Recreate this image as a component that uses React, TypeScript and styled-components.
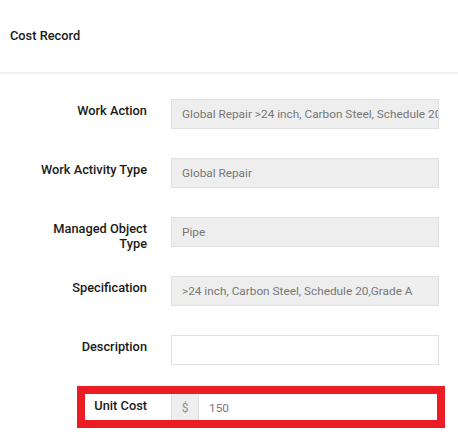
import React from "react";
import styled, { createGlobalStyle } from "styled-components";

const Global = createGlobalStyle`
  html, body { margin: 0; padding: 0; background: #ffffff; }
  body { font-family: Roboto, "Noto Sans", "Liberation Sans", sans-serif; }
  * { box-sizing: border-box; }
`;

const Page = styled.div`
  width: 458px;
  min-height: 434px;
  background: #ffffff;
`;

const Header = styled.header`
  height: 74px;
  display: flex;
  align-items: center;
  padding: 0 0 2px 10px;
  border-bottom: 2px solid #f1f1f1;
`;

const Title = styled.h1`
  margin: 0;
  font-size: 12.8px;
  font-weight: 500;
  color: #1a1a1a;
  line-height: 15px;
`;

const Form = styled.div`
  display: flex;
  flex-direction: column;
  gap: 29px;
  padding-top: 25px;
`;

const Row = styled.div`
  display: grid;
  grid-template-columns: 147px 268px;
  grid-template-rows: 30px;
  column-gap: 24px;
  align-items: start;
`;

const Highlight = styled.div`
  display: grid;
  grid-template-columns: 62px 1fr;
  column-gap: 24px;
  align-items: start;
  width: 368px;
  height: 42px;
  margin: -8px 0 0 77px;
  border: 8px solid #ec1c24;
  overflow: hidden;
`;

const Label = styled.label`
  text-align: right;
  font-size: 12.8px;
  font-weight: 500;
  line-height: 15px;
  color: #1a1a1a;
  padding-top: 4px;
  white-space: nowrap;
`;

const Field = styled.div<{ $readOnly?: boolean }>`
  height: 30px;
  display: flex;
  align-items: center;
  padding: 0 10px;
  background: ${(p) => (p.$readOnly ? "#eeeeee" : "#ffffff")};
  border: 1px solid #e0e0e0;
  font-size: 11.8px;
  color: #777777;
  white-space: nowrap;
  overflow: hidden;
`;

const Group = styled.div`
  display: flex;
  height: 30px;
  margin-top: -1px;
  width: 268px;
`;

const Addon = styled.span`
  width: 27px;
  display: flex;
  align-items: center;
  justify-content: center;
  background: #eeeeee;
  border: 1px solid #e0e0e0;
  border-right: none;
  font-size: 12px;
  color: #8a8f98;
`;

const GroupInput = styled.div`
  flex: 1;
  display: flex;
  align-items: center;
  padding: 0 10px;
  border: 1px solid #e0e0e0;
  font-size: 11.8px;
  color: #7b7480;
`;

const rows: { label: React.ReactNode; value: string; readOnly: boolean }[] = [
  { label: "Work Action", value: "Global Repair >24 inch, Carbon Steel, Schedule 20,Grade A", readOnly: true },
  { label: "Work Activity Type", value: "Global Repair", readOnly: true },
  { label: <>Managed Object<br />Type</>, value: "Pipe", readOnly: true },
  { label: "Specification", value: ">24 inch, Carbon Steel, Schedule 20,Grade A", readOnly: true },
  { label: "Description", value: "", readOnly: false },
];

export default function App() {
  return (
    <Page>
      <Global />
      <Header>
        <Title>Cost Record</Title>
      </Header>
      <Form>
        {rows.map((r, i) => (
          <Row key={i}>
            <Label>{r.label}</Label>
            <Field $readOnly={r.readOnly}>{r.value}</Field>
          </Row>
        ))}
        <Highlight>
          <Label>Unit Cost</Label>
          <Group>
            <Addon>$</Addon>
            <GroupInput>150</GroupInput>
          </Group>
        </Highlight>
      </Form>
    </Page>
  );
}
